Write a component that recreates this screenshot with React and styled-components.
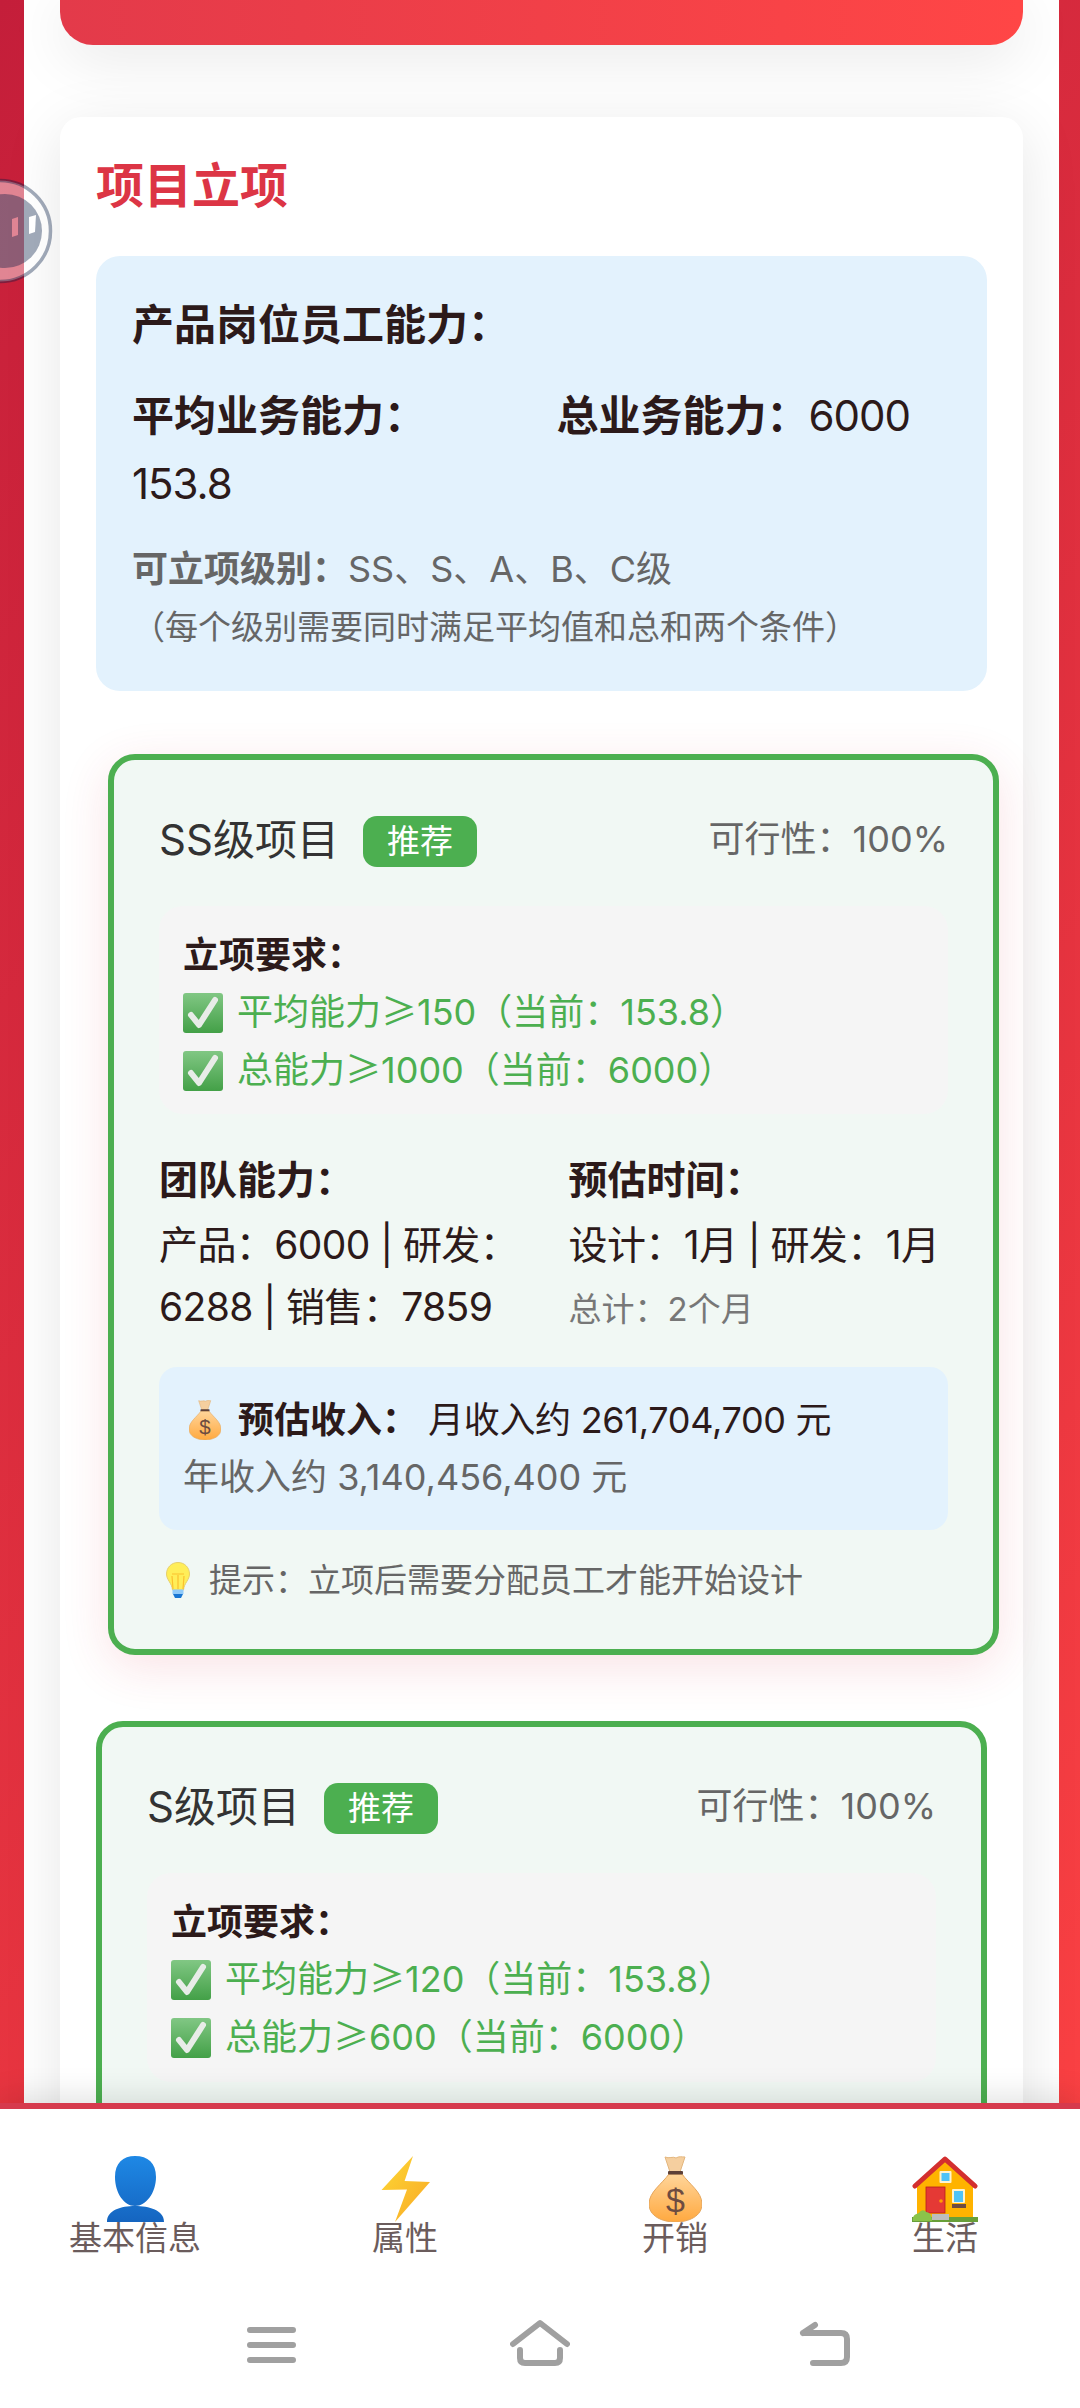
import React from "react";
import styled, { createGlobalStyle } from "styled-components";

const sans = `"Inter", "Noto Sans CJK SC", sans-serif`;

const Global = createGlobalStyle`
  html, body { margin: 0; padding: 0; }
  body { font-family: ${sans}; background: #fff; }
  * { box-sizing: border-box; }
`;

const Screen = styled.div`
  position: relative;
  width: 1080px;
  height: 2408px;
  overflow: hidden;
  display: flex;
  flex-direction: column;
  background: linear-gradient(135deg, #c41e3a 0%, #ff4444 100%);
`;
const Scroller = styled.div`
  flex: 1;
  min-height: 0;
  overflow: hidden;
  padding: 0 21px 0 24px;
`;
const Panel = styled.main`
  background: #fff;
  padding: 0 36px;
  min-height: 100%;
`;
const Banner = styled.div`
  height: 45px;
  border-radius: 0 0 33px 33px;
  background: linear-gradient(90deg, #e33a4a, #ff4646);
  box-shadow: 0 12px 60px rgba(0, 0, 0, 0.1);
`;
const Section = styled.section`
  margin-top: 72px;
  background: #fff;
  border-radius: 21px;
  padding: 30px 36px 60px;
  box-shadow: 0 12px 60px rgba(0, 0, 0, 0.1);
`;
const Heading = styled.h2`
  margin: 0 0 32px;
  font-size: 48px;
  line-height: 77px;
  font-weight: 700;
  color: #dc3545;
`;
const Ge = styled.span`
  font-family: "Noto Sans CJK SC", sans-serif;
  line-height: 1;
`;
const InfoBox = styled.div`
  background: #e3f2fd;
  border-radius: 24px;
  padding: 35px 36px 37px;
  margin-bottom: 63px;
  color: #2c1a1a;
`;
const InfoTitle = styled.div`
  font-size: 42px;
  line-height: 67px;
  font-weight: 700;
  margin-bottom: 24px;
`;
const TwoCols = styled.div`
  display: grid;
  grid-template-columns: 1fr 1fr;
  gap: 30px;
`;
const Stat = styled.div`
  font-size: 42px;
  line-height: 67.5px;
`;
const Num = styled.span`
  display: ${(p) => (p.$own ? "block" : "inline")};
  letter-spacing: -1px;
`;
const Strong = styled.strong`
  font-weight: 700;
`;
const Levels = styled.div`
  margin-top: 24px;
  font-size: 36px;
  line-height: 57.6px;
  color: #666;
`;
const Note = styled.div`
  margin-top: 2px;
  font-size: 33px;
  line-height: 53px;
  color: #666;
`;
const Card = styled.article`
  border: 6px solid #4caf50;
  border-radius: 27px;
  background: #f1f8f4;
  padding: 46px 45px 42px;
  margin: 0 ${(p) => (p.$lifted ? "-12px" : "0")} 66px ${(p) => (p.$lifted ? "12px" : "0")};
  box-shadow: ${(p) => (p.$lifted ? "0 12px 48px rgba(220, 53, 69, 0.14)" : "none")};
`;
const CardHeader = styled.header`
  display: flex;
  align-items: center;
  justify-content: space-between;
  height: 67px;
  margin-bottom: 33px;
`;
const TitleWrap = styled.div`
  display: flex;
  align-items: center;
  gap: 24px;
`;
const CardTitle = styled.h3`
  margin: 0;
  font-size: 42px;
  line-height: 67px;
  font-weight: 400;
  color: #333;
`;
const Badge = styled.span`
  display: flex;
  align-items: center;
  justify-content: center;
  width: 114px;
  height: 51px;
  margin-top: 4px;
  border-radius: 14px;
  background: #4caf50;
  color: #fff;
  font-size: 33px;
  line-height: 51px;
`;
const Feasibility = styled.span`
  font-size: 36px;
  line-height: 57.6px;
  color: #666;
  margin-top: 2px;
`;
const ReqBox = styled.div`
  background: #f5f5f5;
  border-radius: 24px;
  padding: 21px 24px 15px;
  margin-bottom: 35px;
  font-size: 36px;
  line-height: 57.6px;
  color: #2c1a1a;
`;
const ReqOk = styled.div`
  display: flex;
  align-items: center;
  color: #4caf50;
`;
const CheckSvg = styled.svg`
  width: 40px;
  height: 40px;
  flex: none;
  margin-right: 14px;
`;
const Detail = styled.div`
  font-size: 39px;
  line-height: 62.4px;
  color: #2c1a1a;
`;
const DetailLabel = styled.div`
  font-weight: 700;
  margin-bottom: 2px;
`;
const DetailText = styled.div`
  letter-spacing: -0.6px;
`;
const Total = styled.div`
  margin-top: 7px;
  font-size: 33px;
  line-height: 53px;
  color: #777;
`;
const Revenue = styled.div`
  margin-top: 28px;
  background: #e3f2fd;
  border-radius: 18px;
  padding: 25px 24px 23px;
  font-size: 36px;
  line-height: 57.6px;
  color: #2c1a1a;
`;
const RevenueRow = styled.div`
  display: flex;
  align-items: center;
  white-space: pre;
`;
const RevenueMonth = styled.span`
  margin-left: 10px;
  letter-spacing: -0.3px;
`;
const RevenueYear = styled.div`
  color: #666;
`;
const SmallBag = styled.svg`
  width: 32px;
  height: 40px;
  flex: none;
  margin: 0 17px 0 6px;
`;
const Tip = styled.div`
  display: flex;
  align-items: center;
  margin-top: 24px;
  font-size: 33px;
  line-height: 53px;
  color: #666;
`;
const BulbSvg = styled.svg`
  width: 24px;
  height: 36px;
  flex: none;
  margin: 0 19px 0 7px;
`;
const BottomNav = styled.nav`
  position: relative;
  flex: none;
  height: 305px;
  border-top: 6px solid #d63a4d;
  background: #fff;
  box-shadow: 0 -6px 30px rgba(0, 0, 0, 0.12);
`;
const Tabs = styled.div`
  display: grid;
  grid-template-columns: repeat(4, 1fr);
  padding-top: 47px;
`;
const Tab = styled.div`
  display: flex;
  flex-direction: column;
  align-items: center;
`;
const TabIcon = styled.svg`
  height: 66px;
  display: block;
`;
const TabLabel = styled.span`
  font-size: 33px;
  line-height: 33px;
  color: #6b5c5c;
`;
const SystemBar = styled.div`
  display: flex;
  padding: 62px 0 0 240px;
`;
const SystemIcon = styled.svg`
  width: 60px;
  height: 50px;
  margin-left: ${(p) => p.$gap || 0}px;
  fill: none;
  stroke: #a0a0a0;
  stroke-width: 6;
  stroke-linecap: round;
  stroke-linejoin: round;
`;
const Float = styled.svg`
  position: absolute;
  left: 0;
  top: 177px;
  width: 54px;
  height: 108px;
`;

const Check = ({ id }) => (
  <CheckSvg viewBox="0 0 40 40">
    <defs>
      <linearGradient id={id} x1="0" y1="0" x2="0" y2="1">
        <stop offset="0" stopColor="#81c784" />
        <stop offset="1" stopColor="#43a047" />
      </linearGradient>
    </defs>
    <rect width="40" height="40" rx="3" fill={`url(#${id})`} />
    <path d="M8 22 L16 32 L32 7" fill="none" stroke="#e8ece8" strokeWidth="6" strokeLinecap="round" strokeLinejoin="round" />
  </CheckSvg>
);

const BagArt = ({ id }) => (
  <>
    <defs>
      <linearGradient id={id} x1="0" y1="0" x2="0" y2="1">
        <stop offset="0" stopColor="#ffd59a" />
        <stop offset="1" stopColor="#ffa940" />
      </linearGradient>
    </defs>
    <path d="M16 1 C20 3 24 0 27 2 C30 0 33 1 36 1 L31 16 L21 16 Z" fill="#f5cf9f" stroke="#e3b67d" strokeWidth="1" />
    <path d="M20 18 L33 18 C40 28 53 36 53 48 C53 60 40 66 26.5 66 C13 66 0 60 0 48 C0 36 13 28 20 18 Z" fill={`url(#${id})`} stroke="#e5a65c" strokeWidth="1" />
    <rect x="19" y="15" width="15" height="3.5" rx="1" fill="#5d4037" />
    <text x="26.5" y="56" textAnchor="middle" fontFamily="Liberation Sans, sans-serif" fontWeight="400" fontSize="34" fill="#6d4c41">$</text>
  </>
);

const Person = () => (
  <TabIcon viewBox="0 0 57 66" width="57">
    <defs>
      <linearGradient id="pg" x1="0" y1="0" x2="0" y2="1">
        <stop offset="0" stopColor="#1e88e5" />
        <stop offset="1" stopColor="#1565c0" />
      </linearGradient>
    </defs>
    <path d="M28 0 C41 0 49 7 49 21 C49 37 39 50 28 50 C17 50 8 37 8 21 C8 7 16 0 28 0 Z M28 50 C42 50 57 54 57 66 L0 66 C0 54 14 50 28 50 Z" fill="url(#pg)" />
  </TabIcon>
);
const Bolt = () => (
  <TabIcon viewBox="0 0 49 66" width="49">
    <defs>
      <linearGradient id="bg" x1="0" y1="0" x2="1" y2="1">
        <stop offset="0" stopColor="#fdd835" />
        <stop offset="1" stopColor="#f9a825" />
      </linearGradient>
    </defs>
    <path d="M32 0 L0.5 34 L26 33.5 L14 66 L49 26 L23.6 25 Z" fill="url(#bg)" />
  </TabIcon>
);
const Bag = () => (
  <TabIcon viewBox="0 0 53 66" width="53">
    <BagArt id="tabbag" />
  </TabIcon>
);
const House = () => (
  <TabIcon viewBox="0 0 66 66" width="66">
    <path d="M5 28 L33 5 L61 28 L61 62 L5 62 Z" fill="#ffb300" />
    <path d="M3 30 L33 3 L63 30" fill="none" stroke="#d32f2f" strokeWidth="5" strokeLinecap="round" strokeLinejoin="round" />
    <rect x="27.5" y="15" width="12" height="12" rx="1" fill="#fff3d0" />
    <rect x="29.5" y="17" width="8" height="8" fill="#4fc3f7" />
    <rect x="40" y="33" width="13" height="14" rx="1" fill="#fff3d0" />
    <rect x="42" y="35" width="9" height="11" fill="#4fc3f7" />
    <rect x="40" y="48" width="14" height="4" fill="#6d4c41" />
    <rect x="14" y="31" width="19" height="26" fill="#e53935" stroke="#b71c1c" strokeWidth="0.8" />
    <circle cx="29" cy="45" r="1.8" fill="#ffa000" />
    <rect x="0" y="61" width="66" height="5" fill="#689f38" />
    <rect x="20" y="58" width="17" height="6" fill="#bdbdbd" />
    <path d="M1 65 C0 58 5 58 7 57 C9 53 13 54 14 56 C18 56 20 60 20 65 Z" fill="#8bc34a" />
  </TabIcon>
);

const Requirements = ({ id, avg, total }) => (
  <ReqBox>
    <Strong>立项要求：</Strong>
    <ReqOk>
      <Check id={`${id}a`} />
      <span>平均能力<Ge>≥</Ge>{avg}（当前：153.8）</span>
    </ReqOk>
    <ReqOk>
      <Check id={`${id}b`} />
      <span>总能力<Ge>≥</Ge>{total}（当前：6000）</span>
    </ReqOk>
  </ReqBox>
);

export default function App() {
  return (
    <Screen>
      <Global />
      <Scroller>
        <Panel>
          <Banner />
          <Section>
            <Heading>项目立项</Heading>
            <InfoBox>
              <InfoTitle>产品岗位员工能力：</InfoTitle>
              <TwoCols>
                <Stat><Strong>平均业务能力：</Strong><Num $own>153.8</Num></Stat>
                <Stat><Strong>总业务能力：</Strong><Num>6000</Num></Stat>
              </TwoCols>
              <Levels><Strong>可立项级别：</Strong>SS、S、A、B、C级</Levels>
              <Note>（每个级别需要同时满足平均值和总和两个条件）</Note>
            </InfoBox>

            <Card $lifted>
              <CardHeader>
                <TitleWrap>
                  <CardTitle>SS级项目</CardTitle>
                  <Badge>推荐</Badge>
                </TitleWrap>
                <Feasibility>可行性：100%</Feasibility>
              </CardHeader>
              <Requirements id="ss" avg="150" total="1000" />
              <TwoCols>
                <Detail>
                  <DetailLabel>团队能力：</DetailLabel>
                  <DetailText>产品：6000 | 研发：6288 | 销售：7859</DetailText>
                </Detail>
                <Detail>
                  <DetailLabel>预估时间：</DetailLabel>
                  <DetailText>设计：1月 | 研发：1月</DetailText>
                  <Total>总计：2个月</Total>
                </Detail>
              </TwoCols>
              <Revenue>
                <RevenueRow>
                  <SmallBag viewBox="0 0 53 66"><BagArt id="revbag" /></SmallBag>
                  <Strong>预估收入：</Strong>
                  <RevenueMonth>月收入约 261,704,700 元</RevenueMonth>
                </RevenueRow>
                <RevenueYear>年收入约 3,140,456,400 元</RevenueYear>
              </Revenue>
              <Tip>
                <BulbSvg viewBox="0 0 24 36">
                  <path d="M12 0.5 C19 0.5 23.5 6 23.5 12 C23.5 18 18 21 17.5 28 L6.5 28 C6 21 0.5 18 0.5 12 C0.5 6 5 0.5 12 0.5 Z" fill="#ffee58" stroke="#e6cf6a" strokeWidth="1" />
                  <path d="M7 27 L6 14 M12 27 L12 13 M17 27 L18 14 M6 12 L18 12" stroke="#fbc02d" strokeWidth="1.2" fill="none" />
                  <rect x="6.5" y="27.5" width="11" height="4.5" fill="#90caf9" />
                  <path d="M7 32 L17 32 L15 36 L9 36 Z" fill="#1976d2" />
                </BulbSvg>
                <span>提示：立项后需要分配员工才能开始设计</span>
              </Tip>
            </Card>

            <Card>
              <CardHeader>
                <TitleWrap>
                  <CardTitle>S级项目</CardTitle>
                  <Badge>推荐</Badge>
                </TitleWrap>
                <Feasibility>可行性：100%</Feasibility>
              </CardHeader>
              <Requirements id="s" avg="120" total="600" />
            </Card>
          </Section>
        </Panel>
      </Scroller>

      <BottomNav>
        <Tabs>
          <Tab><Person /><TabLabel>基本信息</TabLabel></Tab>
          <Tab><Bolt /><TabLabel>属性</TabLabel></Tab>
          <Tab><Bag /><TabLabel>开销</TabLabel></Tab>
          <Tab><House /><TabLabel>生活</TabLabel></Tab>
        </Tabs>
        <SystemBar>
          <SystemIcon viewBox="0 0 60 50">
            <path d="M10 13 H53 M10 28 H53 M10 43 H53" />
          </SystemIcon>
          <SystemIcon viewBox="0 0 60 50" $gap={210}>
            <path d="M3 27 L30 6 L57 27 M10 33 V41 Q10 46 15 46 H45 Q50 46 50 41 V33" />
          </SystemIcon>
          <SystemIcon viewBox="0 0 60 50" $gap={225}>
            <path d="M8 16 L20 8 M8 16 H46 Q52 16 52 22 V40 Q52 46 46 46 H18" />
          </SystemIcon>
        </SystemBar>
      </BottomNav>

      <Float viewBox="0 0 54 108">
        <circle cx="0" cy="54" r="50.5" fill="rgba(255,255,255,0.45)" stroke="rgba(0,24,65,0.37)" strokeWidth="3.5" />
        <circle cx="5" cy="54" r="37" fill="rgba(0,24,65,0.37)" />
        <path d="M12 42 L18 40 L18 58 L12 60 Z" fill="#e08494" />
        <path d="M29 40 L36 38 L35 55 L29 57 Z" fill="#fff" />
      </Float>
    </Screen>
  );
}
